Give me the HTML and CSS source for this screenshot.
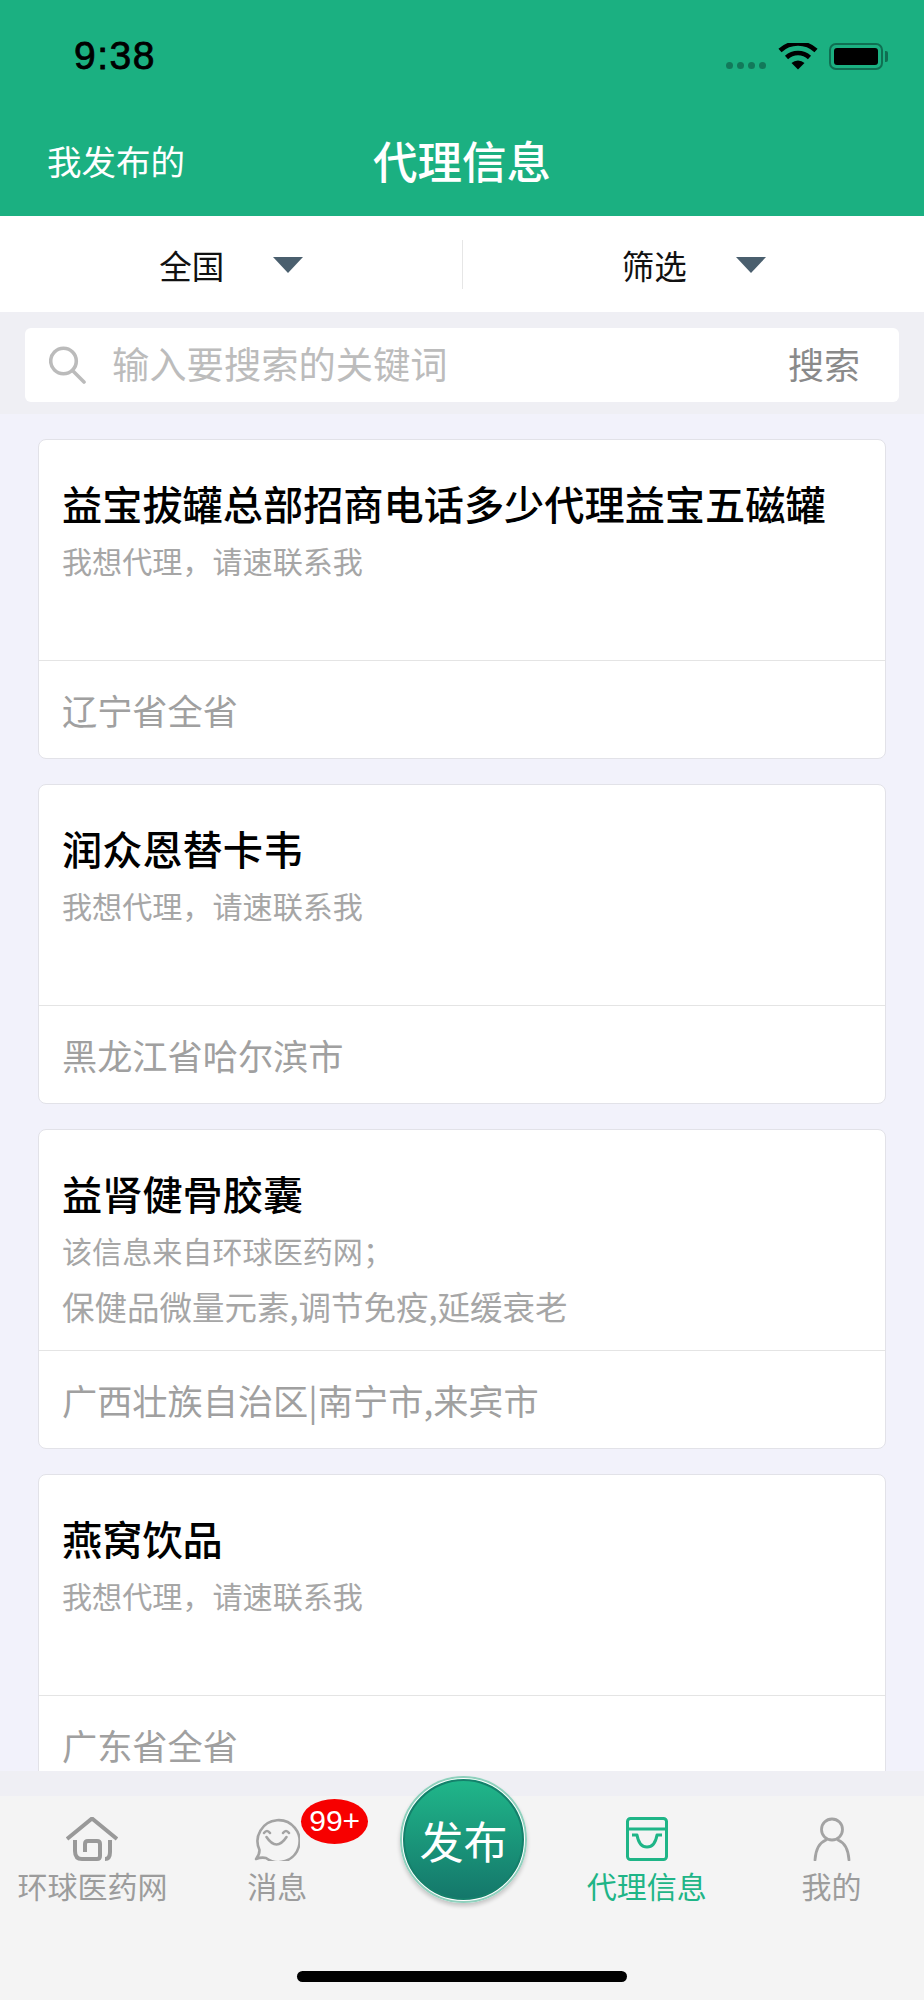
FILE: index.html
```html
<!DOCTYPE html>
<html>
  <head>
    <title>代理信息</title>
    <link rel="stylesheet" href="styles.css">
  </head>
  <body>
    <div class="page">
      <header class="header">
        <div class="status">
          <span class="time">9:38</span>
          <div class="status-icons">
            <span class="signal"><i></i><i></i><i></i><i></i></span>
            <svg class="wifi" viewBox="0 0 40 27">
              <path d="M20 26.500 13.500 20a9.500 9.500 0 0 1 13 0z" fill="#000"/>
              <path d="M8.500 14.500a17 17 0 0 1 23 0M2 7.500a26.500 26.500 0 0 1 36 0" fill="none" stroke="#000" stroke-width="4.600"/>
            </svg>
            <span class="battery"><span class="battery-fill"></span></span>
          </div>
        </div>
        <div class="navbar">
          <span class="nav-left">我发布的</span>
          <span class="nav-title">代理信息</span>
        </div>
      </header>

      <div class="filters">
        <div class="filter"><span>全国</span><i class="arrow"></i></div>
        <div class="filter-line"></div>
        <div class="filter"><span>筛选</span><i class="arrow"></i></div>
      </div>

      <div class="search-band">
        <div class="search-box">
          <svg class="search-icon" viewBox="0 0 38 38">
            <circle cx="14.500" cy="15" r="12.800" fill="none" stroke="#bbb" stroke-width="3.600"/>
            <path d="M24 25 35 36" stroke="#bbb" stroke-width="3.600" stroke-linecap="round"/>
          </svg>
          <span class="placeholder">输入要搜索的关键词</span>
          <span class="search-btn">搜索</span>
        </div>
      </div>

      <main class="list">
        <div class="card">
          <div class="card-body">
            <h3 class="card-title">益宝拔罐总部招商电话多少代理益宝五磁罐</h3>
            <p class="card-sub">我想代理，请速联系我</p>
          </div>
          <div class="card-foot">辽宁省全省</div>
        </div>
        <div class="card">
          <div class="card-body">
            <h3 class="card-title">润众恩替卡韦</h3>
            <p class="card-sub">我想代理，请速联系我</p>
          </div>
          <div class="card-foot">黑龙江省哈尔滨市</div>
        </div>
        <div class="card">
          <div class="card-body">
            <h3 class="card-title">益肾健骨胶囊</h3>
            <p class="card-sub">该信息来自环球医药网；</p>
            <p class="card-sub card-sub-line">保健品微量元素,调节免疫,延缓衰老</p>
          </div>
          <div class="card-foot">广西壮族自治区|南宁市,来宾市</div>
        </div>
        <div class="card">
          <div class="card-body">
            <h3 class="card-title">燕窝饮品</h3>
            <p class="card-sub">我想代理，请速联系我</p>
          </div>
          <div class="card-foot">广东省全省</div>
        </div>
      </main>

      <div class="tab-gap"></div>

      <nav class="tabbar">
        <div class="tab">
          <svg class="tab-icon" viewBox="0 0 52 44" fill="none" stroke="#999" stroke-width="4">
            <path d="M1 22 26 1.500 51 22"/>
            <path d="M9 23v11q0 8 7 8h15q3 0 3-3V27q0-3-3-3h-9q-3 0-3 3v8"/>
            <path d="M44 23v12q0 7-5 7"/>
          </svg>
          <span>环球医药网</span>
        </div>
        <div class="tab">
          <div class="msg-icon">
            <svg class="tab-icon" viewBox="0 0 46 44" fill="none" stroke="#a3a3a3" stroke-width="2.600" stroke-linecap="round" stroke-linejoin="round">
              <path d="M5.500 33A21 21 0 1 1 12 41Q7 40 2 42q3.500-4 3.500-9z"/>
              <path d="M10 16q3-4 6 0M29 16q3-4 6 0"/>
              <path d="M12.500 20q10 15 20 0"/>
            </svg>
            <span class="badge">99+</span>
          </div>
          <span>消息</span>
        </div>
        <div class="tab"></div>
        <div class="tab tab-active">
          <svg class="tab-icon" viewBox="0 0 42 44" fill="none" stroke="#1fb587" stroke-width="3">
            <rect x="1.500" y="1.500" width="39" height="41" rx="3"/>
            <path d="M2 12h38"/>
            <path d="M6 18h5q2 12 10 12t10-12h5" stroke-linejoin="round"/>
          </svg>
          <span>代理信息</span>
        </div>
        <div class="tab">
          <svg class="tab-icon" viewBox="0 0 38 44" fill="none" stroke="#a3a3a3" stroke-width="2.800" stroke-linecap="round">
            <circle cx="19" cy="12.500" r="10.500"/>
            <path d="M13 23Q3 27 2 43M25 23q10 4 11 20"/>
          </svg>
          <span>我的</span>
        </div>
        <button class="publish">发布</button>
        <div class="home-bar"></div>
      </nav>
    </div>
  </body>
</html>
```

FILE: styles.css
```css
* {
  box-sizing: border-box;
}

body {
  margin: 0;
  font-family: "Noto Sans CJK SC", "Liberation Sans", sans-serif;
}

.page {
  display: flex;
  flex-direction: column;
  width: 924px;
  height: 2000px;
  overflow: hidden;
  background-color: #f2f2fb;
}

/* header */
.header {
  flex: none;
  height: 216px;
  background-color: #1bb081;
}

.status {
  display: flex;
  justify-content: space-between;
  align-items: center;
  height: 112px;
  padding: 0 41px 0 74px;
}

.time {
  font-family: "Liberation Sans", sans-serif;
  font-size: 39px;
  font-weight: 500;
  letter-spacing: 1.5px;
  color: #000;
  -webkit-text-stroke: 0.8px #000;
}

.status-icons {
  display: flex;
  align-items: center;
}

.signal {
  display: flex;
  gap: 3.500px;
  margin: 19px 12px 0 0;
}

.signal i {
  width: 7.500px;
  height: 7.500px;
  border-radius: 4px;
  background-color: #12795a;
}

.wifi {
  width: 40px;
  height: 27px;
  margin-right: 11px;
}

.battery {
  position: relative;
  width: 54px;
  height: 27px;
  padding: 3px;
  border: 2px solid #0f6f52;
  border-radius: 7px;
}

.battery::after {
  content: "";
  position: absolute;
  top: 6px;
  right: -7px;
  width: 3px;
  height: 11px;
  border-radius: 0 2px 2px 0;
  background-color: #0f6f52;
}

.battery-fill {
  display: block;
  height: 100%;
  border-radius: 3px;
  background-color: #000;
}

.navbar {
  display: flex;
  align-items: center;
  height: 96px;
  padding-left: 47px;
  color: #fff;
}

.nav-left {
  width: 326px;
  font-size: 34.500px;
  line-height: 100px;
}

.nav-title {
  font-size: 44.500px;
  font-weight: 500;
  line-height: 100px;
}

/* filter bar */
.filters {
  flex: none;
  display: flex;
  align-items: center;
  height: 96px;
  background-color: #fff;
}

.filter {
  display: flex;
  flex: 1;
  align-items: center;
  justify-content: center;
  gap: 49px;
  padding-left: 1px;
  font-size: 32.500px;
  color: #111;
}

.arrow {
  width: 0;
  height: 0;
  margin-top: 2px;
  border-top: 16px solid #4a5f6e;
  border-left: 15px solid transparent;
  border-right: 15px solid transparent;
}

.filter-line {
  width: 1px;
  height: 49px;
  background-color: #e6e6e6;
}

/* search */
.search-band {
  flex: none;
  height: 102px;
  padding: 16px 25px 12px;
  background-color: #efeff4;
}

.search-box {
  display: flex;
  align-items: center;
  height: 74px;
  padding: 0 39px 5px 24px;
  border-radius: 6px;
  background-color: #fff;
}

.search-icon {
  width: 38px;
  height: 38px;
  margin: 5px 25px 0 0;
}

.placeholder {
  flex: 1;
  font-size: 37.300px;
  color: #bcbcbc;
}

.search-btn {
  font-size: 36px;
  color: #8a8a8a;
}

/* list */
.list {
  flex: 1;
  min-height: 0;
  overflow: hidden;
  padding: 25px 38px 0;
}

.card {
  display: flex;
  flex-direction: column;
  flex: none;
  height: 320px;
  margin-bottom: 25px;
  border: 1px solid #e2e2e8;
  border-radius: 8px;
  background-color: #fff;
}

.card-body {
  height: 222px;
  padding: 37px 23px 0;
  border-bottom: 1.500px solid #e4e4e4;
}

.card-title {
  margin: 0;
  font-size: 40.200px;
  font-weight: 500;
  line-height: 52px;
  color: #000;
}

.card-sub {
  margin: 10px 0 0;
  font-size: 30.100px;
  line-height: 42px;
  color: #a6a6a6;
}

.card-sub-line {
  margin-top: 14px;
  font-size: 32.500px;
}

.card-foot {
  padding: 0 23px;
  font-size: 35.200px;
  line-height: 97px;
  color: #a0a0a0;
}

.tab-gap {
  flex: none;
  height: 25px;
  background-color: #efeff4;
}

/* tab bar */
.tabbar {
  position: relative;
  flex: none;
  display: grid;
  grid-template-columns: repeat(5, 1fr);
  height: 204px;
  background-color: #f4f4f4;
}

.tab {
  display: flex;
  flex-direction: column;
  align-items: center;
  height: 110px;
  padding-top: 21px;
  font-size: 30px;
  line-height: 40px;
  color: #9c9c9c;
}

.tab-icon {
  display: block;
  height: 44px;
  margin-bottom: 4px;
}

.tab-active {
  color: #1fb587;
}

.msg-icon {
  position: relative;
}

.badge {
  position: absolute;
  top: -18px;
  left: 47px;
  width: 67px;
  height: 45px;
  border-radius: 50%;
  background-color: #f70000;
  font-family: "Liberation Sans", sans-serif;
  font-size: 30px;
  line-height: 44px;
  text-align: center;
  color: #fff;
}

.publish {
  position: absolute;
  top: -20px;
  left: 400px;
  width: 127px;
  height: 127px;
  padding: 0;
  border: 3px solid #fff;
  border-radius: 50%;
  outline: 2px solid #8fd0bd;
  outline-offset: -2px;
  background: linear-gradient(#20b78a, #14766a);
  box-shadow: inset 0 0 0 2px #15806b, 0 3px 4px rgba(0, 0, 0, 0.2);
  font-family: inherit;
  font-size: 44px;
  color: #fff;
}

.home-bar {
  position: absolute;
  top: 175px;
  left: 297px;
  width: 330px;
  height: 11px;
  border-radius: 6px;
  background-color: #000;
}
```
